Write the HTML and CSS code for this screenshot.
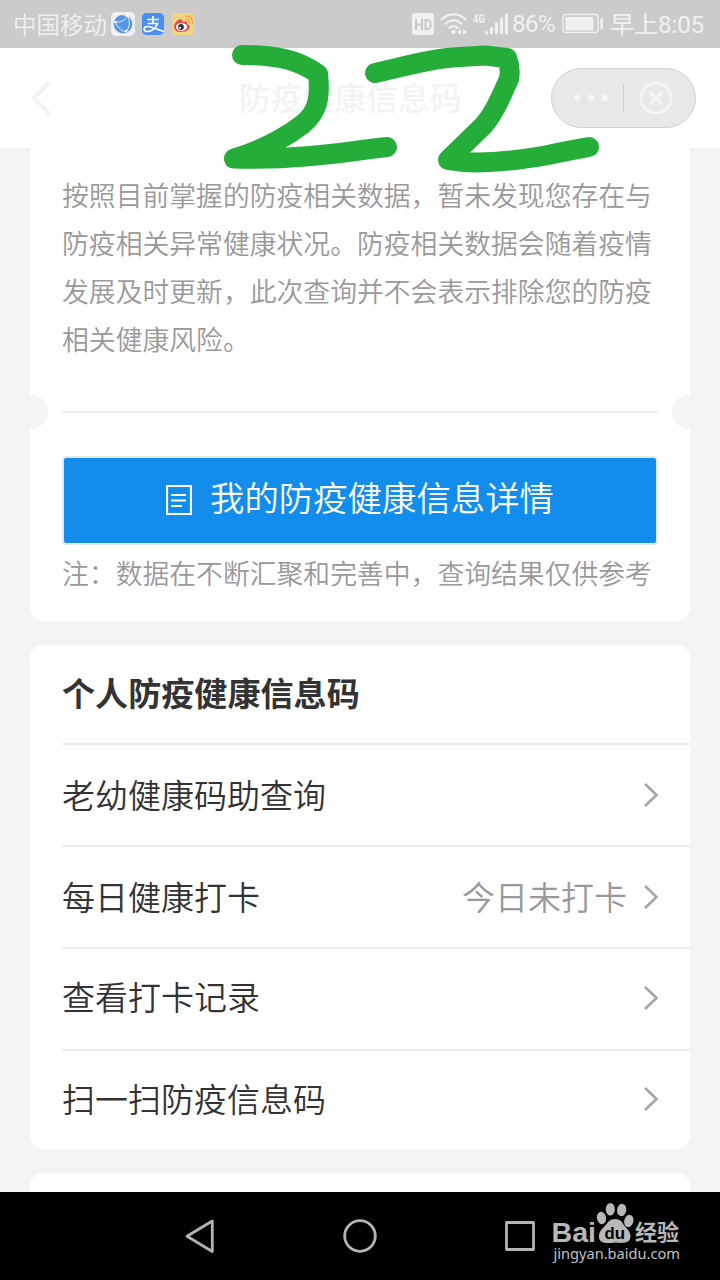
FILE: index.html
```html
<!DOCTYPE html>
<html lang="zh-CN">
<head>
<meta charset="utf-8">
<title>防疫健康信息码</title>
<link rel="stylesheet" href="styles.css">
</head>
<body>
<div class="screen">
  <div class="status">
    <span class="carrier">中国移动</span>
    <svg class="app-icons" width="90" height="48" viewBox="0 0 90 48">
      <rect x="1" y="12" width="24" height="24" rx="5" fill="#f0f0f0"/>
      <circle cx="13" cy="24" r="9.3" fill="#5795e8"/>
      <path d="M5 22C10 23 15 20 18 16C20 21 20 27 16 32M5 22C8 28 12 31 16 32M17 15L12 15" fill="none" stroke="#e8eef8" stroke-width="1"/>
      <circle cx="5.500" cy="22" r="1.300" fill="#fff"/><circle cx="17" cy="16" r="1.300" fill="#fff"/><circle cx="16" cy="31" r="1.300" fill="#fff"/>
      <rect x="32" y="13" width="22" height="22" rx="4.500" fill="#4b8ff0"/>
      <path d="M37 19.500H49M43 16V23M37.500 23.500H47.500C46 28 42 31.500 37.500 31.500C33 31.500 33 26.500 37.500 26.500C42 26.500 46 29.500 54 31.500" fill="none" stroke="#fff" stroke-width="1.700"/>
      <rect x="62" y="13" width="22" height="22" rx="4.500" fill="#efd583"/>
      <path d="M64 27C64 23 69 18 71.500 19.500C73 20 72 22 72.500 22C76 20 78 22 77 24C81 25 80.500 30 75 31.500C70 33 64 31 64 27Z" fill="#e54b4f"/>
      <ellipse cx="71.500" cy="27" rx="5.600" ry="3.900" fill="#fff"/>
      <circle cx="71" cy="27" r="2.900" fill="#333"/><circle cx="70" cy="27.800" r="1" fill="#fff"/>
      <path d="M76 19.500C78.500 19 80 21 79 23.500M75.500 16.500C80 15.500 83.500 19 82 24" fill="none" stroke="#eda343" stroke-width="1.400"/>
    </svg>
    <svg class="signals" width="100" height="48" viewBox="0 0 100 48">
      <rect x="2" y="13" width="22" height="22" rx="3" fill="#f0f0f0"/>
      <path d="M6 19V30M12 19V30M6 24.500H12M15.500 20V29H17C22 29 22 20 17 20Z" fill="none" stroke="#c9c9c9" stroke-width="2"/>
      <g fill="none" stroke="#f0f0f0" stroke-width="2.300">
        <path d="M31 20C38 12.500 49 12.500 56 20M35 24.500C40 19 47 19 52 24.500M38.500 28.500C41.500 25.500 45.500 25.500 48.500 28.500"/>
      </g>
      <circle cx="43.500" cy="32" r="2.200" fill="#f0f0f0"/>
      <path d="M51 29V35L47 32ZM53 29V35L57 32Z" fill="#f0f0f0"/>
      <text class="net" x="63" y="22.500" textLength="12" lengthAdjust="spacingAndGlyphs">4G</text>
      <g stroke="#f0f0f0" stroke-width="3" stroke-linecap="round"><path d="M76.500 32.500V33.200M81.500 28.500V33M86.500 23.500V33M91.500 19V33M96.500 14.500V33"/></g>
    </svg>
    <span class="percent">86%</span>
    <svg class="battery" width="42" height="48" viewBox="0 0 42 48">
      <rect x="1" y="14.500" width="35" height="18" rx="2.500" fill="none" stroke="#f0f0f0" stroke-width="1.300"/>
      <rect x="3.300" y="17" width="28" height="13.500" fill="#f0f0f0"/>
      <rect x="38.300" y="18" width="2.700" height="11.500" rx="1" fill="#f0f0f0"/>
    </svg>
    <span class="clock">早上8:05</span>
  </div>
  <div class="header">
    <svg class="back" width="20" height="36" viewBox="0 0 20 36"><path d="M18.500 2L3 18L18.500 34" fill="none" stroke="#f3f3f3" stroke-width="4"/></svg>
    <h1 class="title">防疫健康信息码</h1>
    <div class="capsule">
      <svg width="143" height="58" viewBox="0 0 143 58">
        <g fill="#f5f5f5"><circle cx="25.500" cy="29" r="3.300"/><circle cx="39" cy="29" r="3.300"/><circle cx="52.500" cy="29" r="3.300"/></g>
        <path d="M71.500 15V43" stroke="#ccc" stroke-width="1"/>
        <circle cx="104" cy="29" r="15" fill="none" stroke="#f5f5f5" stroke-width="3"/>
        <path d="M98 23L110 35M110 23L98 35" stroke="#f5f5f5" stroke-width="3"/>
      </svg>
    </div>
  </div>
  <div class="content">
    <div class="card result">
      <p class="desc">按照目前掌握的防疫相关数据，暂未发现您存在与<br>防疫相关异常健康状况。防疫相关数据会随着疫情<br>发展及时更新，此次查询并不会表示排除您的防疫<br>相关健康风险。</p>
      <div class="tear"></div>
      <div class="button">
        <svg width="26" height="30" viewBox="0 0 26 30"><path d="M1 1H25V29H1ZM5 10H20M5 15.500H20M5 21H16" fill="none" stroke="#fff" stroke-width="2.200"/></svg>
        <span>我的防疫健康信息详情</span>
      </div>
      <p class="note">注：数据在不断汇聚和完善中，查询结果仅供参考</p>
    </div>
    <div class="card menu">
      <h2 class="menu-title">个人防疫健康信息码</h2>
      <div class="row"><span>老幼健康码助查询</span><svg class="chev" width="16" height="26" viewBox="0 0 16 26"><path d="M2 2L13.500 13L2 24"/></svg></div>
      <div class="row"><span>每日健康打卡</span><span class="hint">今日未打卡</span><svg class="chev" width="16" height="26" viewBox="0 0 16 26"><path d="M2 2L13.500 13L2 24"/></svg></div>
      <div class="row"><span>查看打卡记录</span><svg class="chev" width="16" height="26" viewBox="0 0 16 26"><path d="M2 2L13.500 13L2 24"/></svg></div>
      <div class="row"><span>扫一扫防疫信息码</span><svg class="chev" width="16" height="26" viewBox="0 0 16 26"><path d="M2 2L13.500 13L2 24"/></svg></div>
    </div>
    <div class="card next"></div>
  </div>
  <div class="navbar">
    <svg width="360" height="88" viewBox="0 0 360 88" fill="none" stroke="#b3b3b3" stroke-width="2.800" stroke-linejoin="round">
      <path d="M32.300 29V59.500L7 44.200Z"/>
      <circle cx="180" cy="44" r="15.300"/>
      <rect x="326.500" y="30.500" width="27" height="27"/>
    </svg>
  </div>
  <svg class="brand" width="140" height="72" viewBox="550 1198 140 72">
    <text class="logo" x="551.500" y="1242" textLength="44.500" lengthAdjust="spacingAndGlyphs">Bai</text>
    <g fill="#b8b8b8">
      <ellipse cx="601.500" cy="1218" rx="4.600" ry="6.200" transform="rotate(-12 601.500 1218)"/>
      <ellipse cx="610.300" cy="1209.300" rx="4.500" ry="6.300"/>
      <ellipse cx="621.700" cy="1210" rx="4.600" ry="6.200" transform="rotate(10 621.700 1210)"/>
      <ellipse cx="628.800" cy="1221" rx="4.600" ry="6.200" transform="rotate(14 628.800 1221)"/>
      <path d="M599 1235C600 1229 605 1227 608 1222C611 1218 619 1218 622 1222C624 1227 630.500 1230 630.500 1236C630.500 1243 625 1243.500 615 1242.500C605 1244 598 1243 599 1235Z"/>
    </g>
    <text class="du" x="604.500" y="1239" textLength="20.500" lengthAdjust="spacingAndGlyphs">du</text>
    <text class="exp" x="635" y="1240" textLength="44" lengthAdjust="spacingAndGlyphs">经验</text>
    <text class="url" x="553.500" y="1259" textLength="126.500" lengthAdjust="spacingAndGlyphs">jingyan.baidu.com</text>
  </svg>
  <svg class="marker" width="720" height="180" viewBox="0 0 720 180">
    <path d="M242 55C280 55 300 61 318 74C321 101 316 113 303 124C285 138 262 150 234 158.500C285 160 330 155 370 149Q378 148 387 147"/>
    <path d="M375 73C410 65 435 58 460 57L485 55.500L507 58Q511 68 509 79C500 99 494 113 484 125L448 160C475 165 515 161 548 155C570 150 578 149 589 147"/>
  </svg>
</div>
</body>
</html>
```
FILE: styles.css
```css
* { box-sizing: border-box; }
body, p, h1, h2 { margin: 0; }
body { font-family: "Noto Sans CJK SC", sans-serif; font-weight: 350; background: #f4f4f4; }
.screen { position: relative; width: 720px; height: 1280px; overflow: hidden; display: flex; flex-direction: column; }
.status { height: 48px; flex: none; background: #cbcbcb; color: #f0f0f0; display: flex; align-items: center; font-size: 23.5px; line-height: 48px; padding-left: 13px; white-space: nowrap; }
.carrier { width: 97px; }
.signals { margin-left: 210px; }
.net { font: bold 12px Roboto, sans-serif; fill: #f0f0f0; }
.percent { font: 24.5px/46px Roboto, sans-serif; width: 50px; margin-left: 2px; letter-spacing: -0.9px; }
.clock { font-family: Roboto, "Noto Sans CJK SC", sans-serif; font-weight: 400; font-size: 24.3px; letter-spacing: -0.25px; margin-left: 6px; padding-top: 2px; }
.header { height: 100px; flex: none; background: #fff; display: flex; align-items: center; padding: 0 24px 0 31px; }
.title { flex: 1; margin-left: 188px; font-size: 31.8px; font-weight: 500; color: #f3f3f3; line-height: 97px; padding-bottom: 3px; }
.capsule { width: 145px; height: 60px; border: 1px solid #d2d2d2; border-radius: 30px; background: #e8e8e8; }
.capsule svg { display: block; }
.content { flex: 1; overflow: hidden; padding: 0 30px; display: flex; flex-direction: column; gap: 24px; }
.card { background: #fff; border-radius: 14px; flex: none; }
.result { height: 473px; border-radius: 0 0 14px 14px; padding: 23px 32px 0; color: #999; font-size: 26.82px; }
.desc { line-height: 48px; white-space: nowrap; }
.tear { position: relative; height: 2px; background: #ededed; margin: 48px 0 43px; }
.tear::before, .tear::after { content: ""; position: absolute; top: -16px; height: 34px; width: 18px; background: #f4f4f4; }
.tear::before { left: -32px; border-radius: 0 17px 17px 0; }
.tear::after { right: -32px; border-radius: 17px 0 0 17px; }
.button { height: 89px; border: 2px solid #e4e8ec; border-radius: 4px; background: #128deb; color: #fff; display: flex; align-items: center; justify-content: center; gap: 18px; font-size: 34.4px; line-height: 74px; }
.button svg { margin-bottom: 2px; }
.button span { padding-bottom: 10px; }
.note { line-height: 40px; margin-top: 8px; white-space: nowrap; }
.menu { height: 504px; padding-left: 32px; color: #333; font-size: 33px; }
.menu-title { height: 98px; font-size: 33.1px; line-height: 94px; font-weight: 700; }
.row { height: 102px; border-top: 2px solid #ededed; display: flex; align-items: center; padding-right: 31px; line-height: 60px; }
.row span { padding-bottom: 3px; }
.row:nth-child(4) { padding-bottom: 3px; }
.row:last-child { height: 100px; padding-bottom: 2px; }
.row .chev { margin-left: auto; fill: none; stroke: #a5a5a5; stroke-width: 2.6; }
.hint { margin-left: auto; color: #999; }
.row .hint + .chev { margin-left: 16px; }
.next { height: 60px; }
.navbar { height: 88px; flex: none; background: #000; padding-left: 180px; }
.brand { position: absolute; left: 550px; top: 1198px; }
.logo { font: bold 28px "Liberation Sans", sans-serif; fill: #b8b8b8; }
.du { font: bold 17px "Liberation Sans", sans-serif; fill: #000; }
.exp { font: bold 22px "Noto Sans CJK SC", sans-serif; fill: #b8b8b8; }
.url { font: 14.5px "Noto Sans", sans-serif; fill: #c0c0c0; }
.marker { position: absolute; left: 0; top: 0; fill: none; stroke: #24ad39; stroke-width: 20; stroke-linecap: round; stroke-linejoin: round; }
```
